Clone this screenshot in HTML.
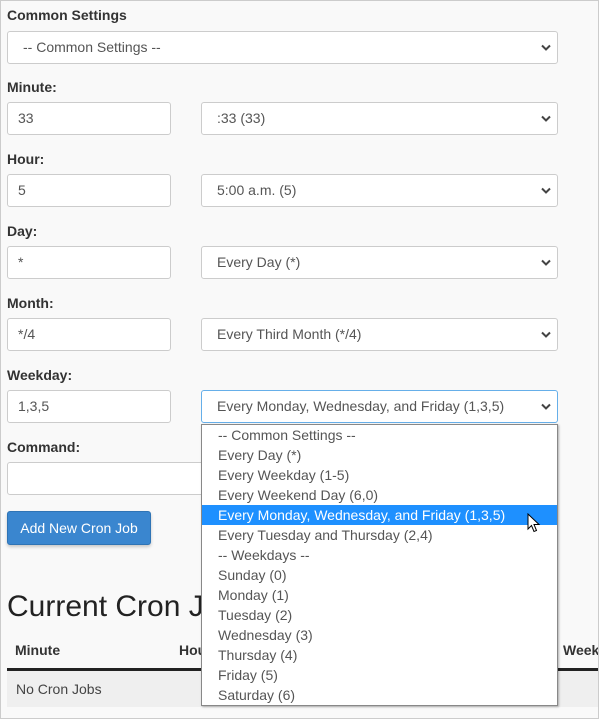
<!DOCTYPE html>
<html><head><style>
*{box-sizing:border-box;margin:0;padding:0}
body{width:600px;height:720px;overflow:hidden;background:#fff;font-family:"Liberation Sans",sans-serif;color:#333}
.frame{position:absolute;left:0;top:0;width:599px;height:719px;border:1px solid #ccc;background:#f9f9f9;overflow:hidden}
.lbl{position:absolute;left:6px;font-size:14px;font-weight:bold;color:#333}
.box{position:absolute;height:33px;background:#fff;border:1px solid #ccc;border-radius:3px;font-size:14px;color:#555;padding-left:10px;line-height:31px}
.sel{padding-left:15px}
.chev{position:absolute;right:6px;top:12px;width:10px;height:7px}
.btn{position:absolute;left:6px;top:510px;width:144px;height:34px;background:#3a86cf;border:1px solid #2f74b5;border-radius:3px;color:#fff;font-size:14px;line-height:32px;text-align:center;box-shadow:0 2px 3px rgba(0,0,0,.2)}
h2{position:absolute;left:6px;top:589px;font-size:30px;font-weight:normal;color:#222}
.th{position:absolute;top:641px;font-size:14px;font-weight:bold;color:#333}
.dd{position:absolute;left:200px;top:423px;width:357px;height:282px;background:#fff;border:1px solid #888;box-shadow:1px 1px 2px rgba(0,0,0,.3)}
.dd div{height:20px;line-height:20px;font-size:14px;color:#555;padding-left:16px;white-space:nowrap}
.dd .hl{background:#1e90ff;color:#fff}
</style></head><body><div class="frame">
<div class="lbl" style="top:6px">Common Settings</div>
<div class="box sel" style="left:6px;top:30px;width:551px">-- Common Settings --<svg class="chev" viewBox="0 0 10 7"><path d="M1 1.5L5 5.5L9 1.5" stroke="#444" stroke-width="2" fill="none"/></svg></div>

<div class="lbl" style="top:78px">Minute:</div>
<div class="box" style="left:6px;top:101px;width:164px">33</div>
<div class="box sel" style="left:200px;top:101px;width:357px">:33 (33)<svg class="chev" viewBox="0 0 10 7"><path d="M1 1.5L5 5.5L9 1.5" stroke="#444" stroke-width="2" fill="none"/></svg></div>

<div class="lbl" style="top:150px">Hour:</div>
<div class="box" style="left:6px;top:173px;width:164px">5</div>
<div class="box sel" style="left:200px;top:173px;width:357px">5:00 a.m. (5)<svg class="chev" viewBox="0 0 10 7"><path d="M1 1.5L5 5.5L9 1.5" stroke="#444" stroke-width="2" fill="none"/></svg></div>

<div class="lbl" style="top:222px">Day:</div>
<div class="box" style="left:6px;top:245px;width:164px">*</div>
<div class="box sel" style="left:200px;top:245px;width:357px">Every Day (*)<svg class="chev" viewBox="0 0 10 7"><path d="M1 1.5L5 5.5L9 1.5" stroke="#444" stroke-width="2" fill="none"/></svg></div>

<div class="lbl" style="top:294px">Month:</div>
<div class="box" style="left:6px;top:317px;width:164px">*/4</div>
<div class="box sel" style="left:200px;top:317px;width:357px">Every Third Month (*/4)<svg class="chev" viewBox="0 0 10 7"><path d="M1 1.5L5 5.5L9 1.5" stroke="#444" stroke-width="2" fill="none"/></svg></div>

<div class="lbl" style="top:366px">Weekday:</div>
<div class="box" style="left:6px;top:389px;width:164px">1,3,5</div>
<div class="box sel" style="left:200px;top:389px;width:357px;border-color:#66afe9">Every Monday, Wednesday, and Friday (1,3,5)<svg class="chev" viewBox="0 0 10 7"><path d="M1 1.5L5 5.5L9 1.5" stroke="#444" stroke-width="2" fill="none"/></svg></div>

<div class="lbl" style="top:438px">Command:</div>
<div class="box" style="left:6px;top:461px;width:551px"></div>
<div class="btn">Add New Cron Job</div>

<h2>Current Cron Jobs</h2>
<div class="th" style="left:14px">Minute</div>
<div class="th" style="left:178px">Hour</div>
<div class="th" style="left:562px">Weekday</div>
<div style="position:absolute;left:6px;top:667px;width:600px;height:3px;background:#222"></div>
<div style="position:absolute;left:6px;top:670px;width:600px;height:36px;background:#efefef;font-size:14px;line-height:36px;padding-left:9px;color:#444">No Cron Jobs</div>

<div class="dd">
<div>-- Common Settings --</div>
<div>Every Day (*)</div>
<div>Every Weekday (1-5)</div>
<div>Every Weekend Day (6,0)</div>
<div class="hl">Every Monday, Wednesday, and Friday (1,3,5)</div>
<div>Every Tuesday and Thursday (2,4)</div>
<div>-- Weekdays --</div>
<div>Sunday (0)</div>
<div>Monday (1)</div>
<div>Tuesday (2)</div>
<div>Wednesday (3)</div>
<div>Thursday (4)</div>
<div>Friday (5)</div>
<div>Saturday (6)</div>
</div>
<svg style="position:absolute;left:526px;top:512px" width="14" height="22" viewBox="0 0 14 22"><path d="M1 1L1 16L4.5 12.5L7 18.5L9.5 17.5L7 11.5L12 11.5Z" fill="#fff" stroke="#000" stroke-width="1"/></svg>
</div></body></html>
